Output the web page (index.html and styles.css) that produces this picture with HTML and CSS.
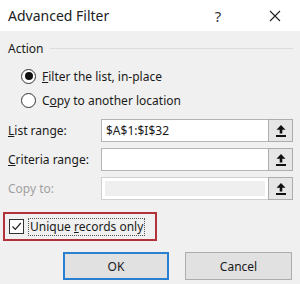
FILE: index.html
```html
<!DOCTYPE html>
<html lang="en">
<head>
  <meta charset="UTF-8" />
  <title>Advanced Filter</title>
  <link rel="stylesheet" href="styles.css">
</head>
<body>
  <div class="dialog">
    <div class="titlebar">
      <div class="title">Advanced Filter</div>
      <div class="help">?</div>
      <div class="close">
        <svg width="12" height="12" viewBox="0 0 12 12"><path d="M1 1L11 11M11 1L1 11" stroke="#222" stroke-width="1.1" fill="none"/></svg>
      </div>
    </div>

    <div class="body">
      <div class="group-head">
        <span>Action</span>
        <div class="group-line"></div>
      </div>

      <div class="radios">
        <label class="radio-row">
          <span class="radio checked"></span>
          <span><u>F</u>ilter the list, in-place</span>
        </label>
        <label class="radio-row">
          <span class="radio"></span>
          <span>C<u>o</u>py to another location</span>
        </label>
      </div>

      <div class="fields">
        <span class="field-label"><u>L</u>ist range:</span>
        <div class="field-input">$A$1:$I$32</div>
        <div class="pick">
          <svg width="10" height="12" viewBox="0 0 10 12"><path d="M5 0L9.5 4.8H6.3V8.4H3.7V4.8H0.5Z" fill="#111"/><rect x="0" y="10" width="10" height="2" fill="#111"/></svg>
        </div>

        <span class="field-label"><u>C</u>riteria range:</span>
        <div class="field-input"></div>
        <div class="pick">
          <svg width="10" height="12" viewBox="0 0 10 12"><path d="M5 0L9.5 4.8H6.3V8.4H3.7V4.8H0.5Z" fill="#111"/><rect x="0" y="10" width="10" height="2" fill="#111"/></svg>
        </div>

        <span class="field-label disabled">Copy to:</span>
        <div class="field-input off"><div class="off-fill"></div></div>
        <div class="pick">
          <svg width="10" height="12" viewBox="0 0 10 12"><path d="M5 0L9.5 4.8H6.3V8.4H3.7V4.8H0.5Z" fill="#111"/><rect x="0" y="10" width="10" height="2" fill="#111"/></svg>
        </div>
      </div>

      <div class="unique">
        <span class="check">
          <svg width="11" height="11" viewBox="0 0 11 11"><path d="M1.5 5.5L4.3 8.3L9.8 2" stroke="#222" stroke-width="1.2" fill="none"/></svg>
        </span>
        <span class="focus">Unique <u>r</u>ecords only</span>
      </div>

      <div class="buttons">
        <button class="btn default">OK</button>
        <button class="btn">Cancel</button>
      </div>
    </div>
  </div>
</body>
</html>
```

FILE: styles.css
```css
body {
  margin: 0;
  background: #f0f0f0;
  font-family: 'Noto Sans', sans-serif;
  color: #1a1a1a;
}

.dialog {
  width: 300px;
  height: 284px;
  overflow: hidden;
}

.titlebar {
  height: 31px;
  background: #fff;
  display: flex;
  align-items: center;
  padding-left: 8px;
}

.title {
  font-size: 14px;
  color: #222;
  flex: 1;
}

.help {
  width: 14px;
  font-size: 15px;
  color: #333;
  text-align: center;
  margin-right: 44px;
}

.close {
  width: 12px;
  height: 12px;
  margin-right: 19px;
  display: flex;
}

.body {
  padding: 9px 7px 0 8px;
  font-size: 12px;
}

/* group box header */
.group-head {
  height: 16px;
  display: flex;
  align-items: center;
}

.group-line {
  flex: 1;
  height: 1px;
  background: #dcdcdc;
  margin-left: 6px;
}

.radios {
  margin-top: 8px;
  padding-left: 13px;
}

.radio-row {
  height: 24px;
  display: flex;
  align-items: center;
}

.radio {
  width: 13px;
  height: 13px;
  border: 1px solid #333;
  border-radius: 50%;
  background: #fff;
  margin-right: 6px;
  display: flex;
  align-items: center;
  justify-content: center;
}

.radio.checked::after {
  content: "";
  width: 8px;
  height: 8px;
  border-radius: 50%;
  background: #111;
}

.fields {
  margin-top: 7px;
  display: grid;
  grid-template-columns: 93px 167px 25px;
  grid-auto-rows: 23px;
  row-gap: 6px;
  align-items: center;
}

.field-label.disabled {
  color: #a0a0a0;
}

.field-input {
  height: 23px;
  box-sizing: border-box;
  border: 1px solid #b4b4b4;
  border-right: none;
  background: #fff;
  padding-left: 4px;
  display: flex;
  align-items: center;
}

.field-input.off {
  border-color: #d0d0d0;
  padding: 3px;
}

.off-fill {
  width: 100%;
  height: 100%;
  background: #efefef;
}

.pick {
  height: 23px;
  box-sizing: border-box;
  border: 1px solid #adadad;
  background: #e6e6e6;
  display: flex;
  align-items: center;
  justify-content: center;
}

/* checkbox highlighted with a red box */
.unique {
  margin: 12px 0 0 -5px;
  width: 154px;
  height: 29px;
  box-sizing: border-box;
  border: 2px solid #b2323c;
  display: flex;
  align-items: center;
  padding-left: 4px;
}

.check {
  width: 13px;
  height: 13px;
  border: 1px solid #333;
  background: #fff;
  display: flex;
  align-items: center;
  justify-content: center;
  margin-right: 4px;
}

.focus {
  border: 1px dotted #555;
  padding: 0 1px;
  line-height: 16px;
}

.buttons {
  margin-top: 11px;
  display: flex;
  justify-content: flex-end;
  gap: 16px;
  padding-right: 1px;
}

.btn {
  width: 107px;
  height: 28px;
  background: #e1e1e1;
  border: 1px solid #adadad;
  font-family: 'Noto Sans', sans-serif;
  font-size: 12px;
  color: #1a1a1a;
  padding: 0;
}

.btn.default {
  width: 106px;
  border: 2px solid #2a7fd0;
}
```
